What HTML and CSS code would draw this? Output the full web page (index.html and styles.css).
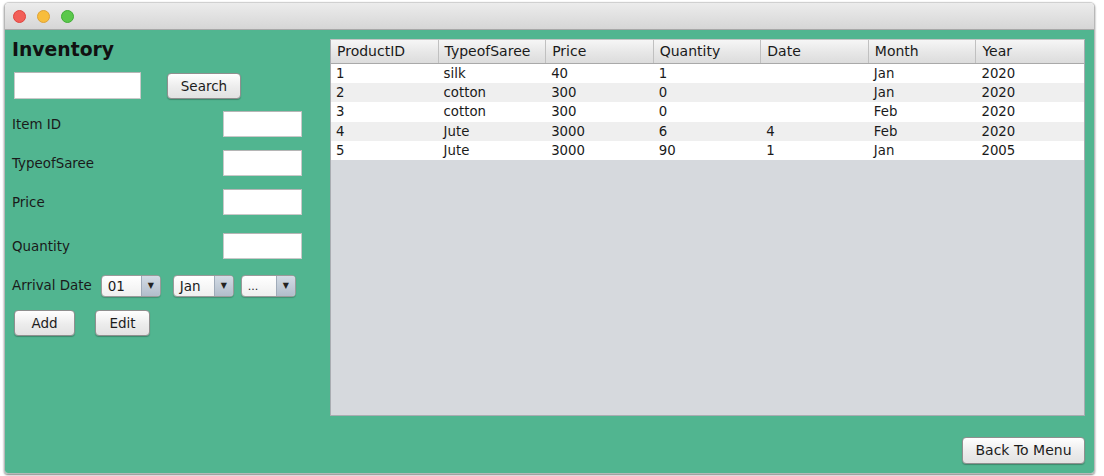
FILE: index.html
```html
<!DOCTYPE html>
<html>
<head>
<meta charset="utf-8">
<link rel="stylesheet" href="styles.css">
</head>
<body>
<div class="window">
  <div class="titlebar">
    <span class="light red"></span><span class="light yellow"></span><span class="light green"></span>
  </div>
  <div class="content">
    <div class="left">
      <h1 class="title">Inventory</h1>
      <div class="search-row">
        <div class="field search-field"></div>
        <div class="btn search-btn">Search</div>
      </div>
      <div class="form-row r1"><span class="label">Item ID</span><div class="field small"></div></div>
      <div class="form-row r2"><span class="label">TypeofSaree</span><div class="field small"></div></div>
      <div class="form-row r3"><span class="label">Price</span><div class="field small"></div></div>
      <div class="form-row r4"><span class="label">Quantity</span><div class="field small"></div></div>
      <div class="date-row">
        <span class="label">Arrival Date</span>
        <div class="combo c1"><span class="cval">01</span><span class="carrow">&#9660;</span></div>
        <div class="combo c2"><span class="cval">Jan</span><span class="carrow">&#9660;</span></div>
        <div class="combo c3"><span class="cval dots">...</span><span class="carrow">&#9660;</span></div>
      </div>
      <div class="btn-row">
        <div class="btn add-btn">Add</div>
        <div class="btn edit-btn">Edit</div>
      </div>
    </div>
    <div class="right">
      <div class="table">
        <div class="thead">
          <div class="th">ProductID</div><div class="th">TypeofSaree</div><div class="th">Price</div><div class="th">Quantity</div><div class="th">Date</div><div class="th">Month</div><div class="th last">Year</div>
        </div>
        <div class="tr"><div>1</div><div>silk</div><div>40</div><div>1</div><div></div><div>Jan</div><div>2020</div></div>
        <div class="tr alt"><div>2</div><div>cotton</div><div>300</div><div>0</div><div></div><div>Jan</div><div>2020</div></div>
        <div class="tr"><div>3</div><div>cotton</div><div>300</div><div>0</div><div></div><div>Feb</div><div>2020</div></div>
        <div class="tr alt"><div>4</div><div>Jute</div><div>3000</div><div>6</div><div>4</div><div>Feb</div><div>2020</div></div>
        <div class="tr"><div>5</div><div>Jute</div><div>3000</div><div>90</div><div>1</div><div>Jan</div><div>2005</div></div>
      </div>
      <div class="bottom">
        <div class="btn back-btn">Back To Menu</div>
      </div>
    </div>
  </div>
</div>
</body>
</html>
```
FILE: styles.css
```css
* { box-sizing: border-box; }
html, body { margin: 0; padding: 0; background: #ffffff; }
body {
  font-family: "Lucida Grande", "DejaVu Sans", sans-serif;
  font-size: 13px;
  color: #1a1a1a;
  width: 1104px;
  height: 476px;
  overflow: hidden;
}
.window {
  margin: 2px 0 0 4px;
  width: 1091px;
  height: 472px;
  border-radius: 5px 5px 4px 4px;
  overflow: hidden;
  display: flex;
  flex-direction: column;
  box-shadow: 0 1px 2px rgba(0,0,0,0.5);
  border: 1px solid #b8b8b8;
  border-top-color: #d0d0d0;
}
.titlebar {
  height: 27px;
  flex: none;
  background: linear-gradient(#ececec, #d6d6d6);
  border-bottom: 1px solid #a8a8a8;
  display: flex;
  align-items: center;
  padding-left: 8px;
  gap: 11px;
}
.light {
  width: 13px; height: 13px; border-radius: 50%;
  display: inline-block;
}
.red { background: #f25f58; border: 1px solid #e0443e; }
.yellow { background: #f8bd3c; border: 1px solid #dea236; }
.green { background: #5bc84c; border: 1px solid #3fae35; }
.content {
  flex: 1;
  background: #51b590;
  display: flex;
}
.left {
  width: 325px;
  flex: none;
  padding-left: 7px;
}
.title {
  margin: 8px 0 0 0;
  font-size: 18.8px;
  font-weight: bold;
  line-height: 24px;
  color: #111;
}
.field {
  background: #fff;
  border: 1px solid #c9c9c9;
  border-top-color: #b5b5b5;
  height: 26px;
}
.search-row {
  display: flex;
  align-items: center;
  margin-top: 10px;
}
.search-field { width: 127px; margin-left: 2px; height: 27px; }
.btn {
  background: linear-gradient(#ffffff, #ececec 55%, #e2e2e2);
  border: 1px solid #8f8f8f;
  border-radius: 4px;
  box-shadow: 0 1px 1px rgba(0,0,0,0.25);
  text-align: center;
  font-size: 13.5px;
  color: #1c1c1c;
  height: 26px;
  line-height: 24px;
}
.search-btn { width: 74px; margin-left: 26px; }
.form-row {
  display: flex;
  align-items: center;
  justify-content: space-between;
  width: 290px;
}
.label { font-size: 13.4px; color: #1a1a1a; }
.small { width: 79px; height: 26px; }
.r1 { margin-top: 12px; }
.r2 { margin-top: 13px; }
.r3 { margin-top: 13px; }
.r4 { margin-top: 18px; }
.date-row {
  display: flex;
  align-items: center;
  margin-top: 15px;
  height: 23px;
}
.combo {
  height: 22px;
  border: 1px solid #9a9a9a;
  border-radius: 4px;
  background: linear-gradient(#ffffff, #efefef);
  display: flex;
  align-items: stretch;
  overflow: hidden;
  box-shadow: 0 1px 1px rgba(0,0,0,0.2);
}
.cval {
  flex: 1;
  padding-left: 6px;
  line-height: 20px;
  font-size: 13.5px;
}
.dots { font-size: 11px; line-height: 22px; }
.carrow {
  width: 19px;
  border-left: 1px solid #a0abb9;
  background: linear-gradient(#d3dbe5, #b2bdcb);
  font-size: 8px;
  text-align: center;
  line-height: 20px;
  color: #222;
}
.c1 { width: 60px; margin-left: 9px; }
.c2 { width: 61px; margin-left: 12px; }
.c3 { width: 55px; margin-left: 7px; }
.btn-row {
  display: flex;
  margin-top: 13px;
  margin-left: 2px;
}
.add-btn { width: 61px; }
.edit-btn { width: 55px; margin-left: 20px; }
.right {
  flex: none;
  width: 755px;
  display: flex;
  flex-direction: column;
}
.table {
  margin-top: 9px;
  height: 377px;
  background: #d6d9dd;
  border: 1px solid #a9acb1;
  border-top: 1px solid #c4c4c4;
}
.thead {
  display: grid;
  grid-template-columns: repeat(7, 1fr);
  height: 24px;
  background: linear-gradient(#f6f6f6, #e8e8e8 50%, #dcdcdc);
  border-bottom: 1px solid #a9a9a9;
}
.th {
  padding-left: 6px;
  line-height: 23px;
  font-size: 14px;
  border-right: 1px solid #c0c0c0;
  color: #1a1a1a;
}
.th.last { border-right: none; }
.tr {
  display: grid;
  grid-template-columns: repeat(7, 1fr);
  height: 19.2px;
  background: #ffffff;
  font-size: 13.3px;
  line-height: 19px;
}
.tr.alt { background: #efefef; }
.tr div { padding-left: 5px; }
.bottom {
  display: flex;
  justify-content: flex-end;
  margin-top: 21px;
}
.back-btn { width: 123px; height: 27px; line-height: 25px; font-size: 14px; }
```
